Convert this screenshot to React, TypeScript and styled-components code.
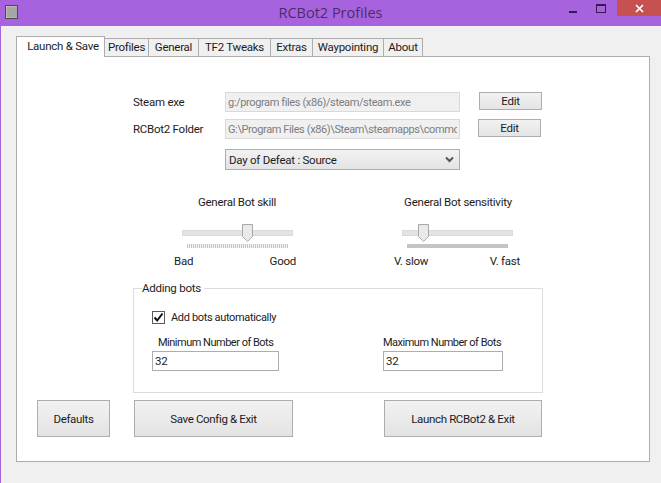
import React from "react";
import styled, { createGlobalStyle } from "styled-components";

const Global = createGlobalStyle`
  html, body { margin: 0; padding: 0; width: 661px; height: 483px; overflow: hidden; background: #f0f0f0; }
  * { box-sizing: border-box; }
  body { font-family: Roboto, "Noto Sans", sans-serif; font-size: 11.5px; letter-spacing: -0.25px; color: #1c1c1c; }
`;

const Win = styled.div`
  width: 661px; height: 483px; background: #f0f0f0; border-left: 1px solid #a664dc;
  display: flex; flex-direction: column;
`;
const TitleBar = styled.div`
  height: 26px; margin-left: -1px; background: #a763de; display: flex; align-items: flex-start; position: relative; flex: none;
`;
const AppIcon = styled.svg`margin: 5px 0 0 5px; flex: none;`;
const Title = styled.div`
  position: absolute; left: 0; right: 0; top: 3px; text-align: center; font-family: "Open Sans", sans-serif; font-size: 14.5px; letter-spacing: 0; line-height: 19px; color: #4c2b6b;
`;
const Controls = styled.div`margin-left: auto; display: flex; align-items: flex-start;`;
const Ctl = styled.div`width: 27px; height: 16px; display: flex; align-items: center; justify-content: center;`;
const Close = styled.div`
  width: 44px; height: 16px; margin-left: 3px; background: #c75050; display: flex; align-items: center; justify-content: center;
`;
const TabStrip = styled.div`
  display: flex; align-items: flex-end; margin: 10px 0 0 15px; height: 21px; position: relative; z-index: 1; flex: none;
`;
const Tab = styled.div<{ $w: number; $active?: boolean }>`
  width: ${p => p.$w}px; height: ${p => (p.$active ? 21 : 19)}px; flex: none;
  background: ${p => (p.$active ? "#fff" : "#f0f0f0")};
  border: 1px solid #adadad; border-bottom: ${p => (p.$active ? "none" : "1px solid #adadad")};
  border-left: ${p => (p.$active ? "1px solid #adadad" : "none")};
  text-align: center; line-height: 17px; padding-top: ${p => (p.$active ? 1 : 0)}px;
  padding-left: ${p => (p.$active ? 5 : 0)}px;
  white-space: nowrap;
`;
const Panel = styled.div`
  width: 634px; height: 406px; margin: -1px 0 0 15px; background: #fff; border: 1px solid #adadad; flex: none;
  padding: 35px 0 0 116px; display: flex; flex-direction: column;
`;
const FieldRow = styled.div<{ $mt?: number }>`
  display: flex; align-items: flex-start; margin-top: ${p => p.$mt ?? 0}px;
`;
const FieldLabel = styled.div`width: 92px; line-height: 20px; flex: none;`;
const ReadOnly = styled.input`
  width: 235px; height: 20px; border: 1px solid #d9d9d9; background: #f0f0f0; color: #7d7d7d;
  font: inherit; font-size: 11px; letter-spacing: -0.38px; padding: 0 2px;
  outline: none;
`;
const EditBtn = styled.button<{ $ml: number }>`
  width: 63px; height: 18px; margin-left: ${p => p.$ml}px; padding: 0; border: 1px solid #adadad; color: #1c1c1c;
  background: linear-gradient(#f2f2f2, #e4e4e4); font: inherit; letter-spacing: inherit;
`;
const Combo = styled.div`
  width: 235px; height: 21px; margin: 10px 0 0 92px; border: 1px solid #adadad; background: linear-gradient(#f2f2f2, #e4e4e4);
  display: flex; align-items: center; justify-content: space-between; padding: 0 5px 0 3px; flex: none;
`;
const SliderRow = styled.div`
  display: flex; margin: 24px 0 0 39px; flex: none;
`;
const SliderBlock = styled.div<{ $ml?: number }>`
  width: 130px; margin-left: ${p => p.$ml ?? 0}px; display: flex; flex-direction: column;
`;
const SliderTitle = styled.div`text-align: center; line-height: 16px; white-space: nowrap;`;
const TrackArea = styled.div<{ $l: number; $r: number }>`
  position: relative; height: 18px; margin: 14px ${p => p.$r}px 0 ${p => p.$l}px;
  &::before { content: ""; position: absolute; left: 0; right: 0; top: 6px; height: 4px; background: #e3e3e3; border: 1px solid #dadada; }
`;
const Thumb = styled.svg<{ $x: number }>`position: absolute; left: ${p => p.$x}px; top: 0;`;
const Ticks = styled.div<{ $dense?: boolean; $l: number; $r: number }>`
  height: 4px; margin: 2px ${p => p.$r}px 0 ${p => p.$l}px;
  background: ${p => (p.$dense
    ? "#c4c4c4"
    : "repeating-linear-gradient(90deg, #c4c4c4 0 1px, #f4f4f4 1px 2px)")};
`;
const EndLabels = styled.div<{ $l: number; $r: number }>`
  display: flex; justify-content: space-between; margin-top: 5px; padding: 0 ${p => p.$r}px 0 ${p => p.$l}px; line-height: 16px; white-space: nowrap;
`;
const Group = styled.fieldset`
  width: 410px; height: 113px; margin: 11px 0 0 0; padding: 13px 0 0 18px; border: 1px solid #dcdcdc; min-width: 0; flex: none; display: block;
`;
const Legend = styled.legend`padding: 0 3px 0 0; margin-left: -10px; line-height: 16px;`;
const CheckRow = styled.label`display: flex; align-items: center; height: 16px;`;
const Box = styled.span`
  width: 13px; height: 13px; border: 1px solid #5a5a5a; background: #fff; display: flex; align-items: center; justify-content: center; margin-right: 6px; flex: none; margin-top: 1px;
`;
const CheckText = styled.span`font-size: 11px; letter-spacing: -0.35px;`;
const NumCols = styled.div`display: flex; margin-top: 9px;`;
const NumCol = styled.div<{ $w: number; $ml?: number; $indent?: number }>`
  width: ${p => p.$w}px; margin-left: ${p => p.$ml ?? 0}px; flex: none;
  & > div { padding-left: ${p => p.$indent ?? 0}px; }
`;
const NumLabel = styled.div`line-height: 17px; white-space: nowrap; font-size: 11px; letter-spacing: -0.5px;`;
const NumInput = styled.input`
  display: block; width: 100%; height: 20px; border: 1px solid #adadad; background: #fff; font: inherit; letter-spacing: inherit; color: #1c1c1c; padding: 0 2px; outline: none;
`;
const ActionRow = styled.div`display: flex; margin: 7px 0 0 -96px; flex: none;`;
const ActionBtn = styled.button<{ $w: number; $ml?: number }>`
  width: ${p => p.$w}px; height: 37px; margin-left: ${p => p.$ml ?? 0}px; padding: 0; border: 1px solid #adadad; color: #1c1c1c;
  background: linear-gradient(#f2f2f2, #e3e3e3); font: inherit; letter-spacing: -0.35px;
`;

const Chevron = () => (
  <svg width="9" height="7" viewBox="0 0 9 7"><path d="M1 1.5 L4.5 5 L8 1.5" fill="none" stroke="#555" strokeWidth="2" /></svg>
);
const ThumbIcon = ({ x }: { x: number }) => (
  <Thumb $x={x} width="12" height="18" viewBox="0 0 12 18">
    <path d="M.5.5H10.5V12.5L5.5 17.5L.5 12.5Z" fill="#e9e9e9" stroke="#a8a8a8" />
  </Thumb>
);

const tabs: [string, number][] = [["Profiles", 44], ["General", 50], ["TF2 Tweaks", 72], ["Extras", 42], ["Waypointing", 71], ["About", 39]];

export default function App() {
  return (
    <Win>
      <Global />
      <TitleBar>
        <AppIcon width="14" height="14" viewBox="0 0 14 14">
          <rect x=".5" y=".5" width="12" height="13" fill="#d8d8d8" stroke="#4a4a4a" />
          <path d="M3 1v12M5 1v12M7 1v12M9 1v12M11 1v12M1 3h11M1 5h11M1 7h11M1 9h11M1 11h11" stroke="#8c8c8c" strokeWidth=".8" />
        </AppIcon>
        <Title>RCBot2 Profiles</Title>
        <Controls>
          <Ctl><svg width="9" height="12" viewBox="0 0 9 12"><rect y="9" width="8" height="2" fill="#33194f" /></svg></Ctl>
          <Ctl><svg width="10" height="9" viewBox="0 0 10 9"><rect x=".5" y=".5" width="9" height="8" fill="none" stroke="#33194f" /><rect x="0" y="0" width="10" height="2" fill="#33194f" /></svg></Ctl>
          <Close><svg width="9" height="9" viewBox="0 0 9 9"><path d="M1 1L8 8M8 1L1 8" stroke="#fff" strokeWidth="1.7" /></svg></Close>
        </Controls>
      </TitleBar>
      <TabStrip>
        <Tab $w={89} $active>Launch &amp; Save</Tab>
        {tabs.map(([t, w]) => <Tab key={t} $w={w}>{t}</Tab>)}
      </TabStrip>
      <Panel>
        <FieldRow>
          <FieldLabel>Steam exe</FieldLabel>
          <ReadOnly readOnly value="g:/program files (x86)/steam/steam.exe" />
          <EditBtn $ml={19}>Edit</EditBtn>
        </FieldRow>
        <FieldRow $mt={7}>
          <FieldLabel>RCBot2 Folder</FieldLabel>
          <ReadOnly readOnly value="G:\Program Files (x86)\Steam\steamapps\common" />
          <EditBtn $ml={18}>Edit</EditBtn>
        </FieldRow>
        <Combo>Day of Defeat : Source<Chevron /></Combo>
        <SliderRow>
          <SliderBlock>
            <SliderTitle>General Bot skill</SliderTitle>
            <TrackArea $l={10} $r={9}><ThumbIcon x={60} /></TrackArea>
            <Ticks $l={15} $r={14} />
            <EndLabels $l={2} $r={6}><span>Bad</span><span>Good</span></EndLabels>
          </SliderBlock>
          <SliderBlock $ml={91}>
            <SliderTitle>General Bot sensitivity</SliderTitle>
            <TrackArea $l={9} $r={10}><ThumbIcon x={16} /></TrackArea>
            <Ticks $dense $l={14} $r={15} />
            <EndLabels $l={1} $r={3}><span>V. slow</span><span>V. fast</span></EndLabels>
          </SliderBlock>
        </SliderRow>
        <Group>
          <Legend>Adding bots</Legend>
          <CheckRow>
            <Box>
              <svg width="11" height="11" viewBox="0 0 11 11"><path d="M1.5 5.5L4.2 8.5L9.5 1.5" fill="none" stroke="#111" strokeWidth="2" /></svg>
            </Box>
            <CheckText>Add bots automatically</CheckText>
          </CheckRow>
          <NumCols>
            <NumCol $w={127} $indent={6}>
              <NumLabel>Minimum Number of Bots</NumLabel>
              <NumInput readOnly value="32" />
            </NumCol>
            <NumCol $w={120} $ml={104}>
              <NumLabel>Maximum Number of Bots</NumLabel>
              <NumInput readOnly value="32" />
            </NumCol>
          </NumCols>
        </Group>
        <ActionRow>
          <ActionBtn $w={73}>Defaults</ActionBtn>
          <ActionBtn $w={159} $ml={24}>Save Config &amp; Exit</ActionBtn>
          <ActionBtn $w={158} $ml={91}>Launch RCBot2 &amp; Exit</ActionBtn>
        </ActionRow>
      </Panel>
    </Win>
  );
}
